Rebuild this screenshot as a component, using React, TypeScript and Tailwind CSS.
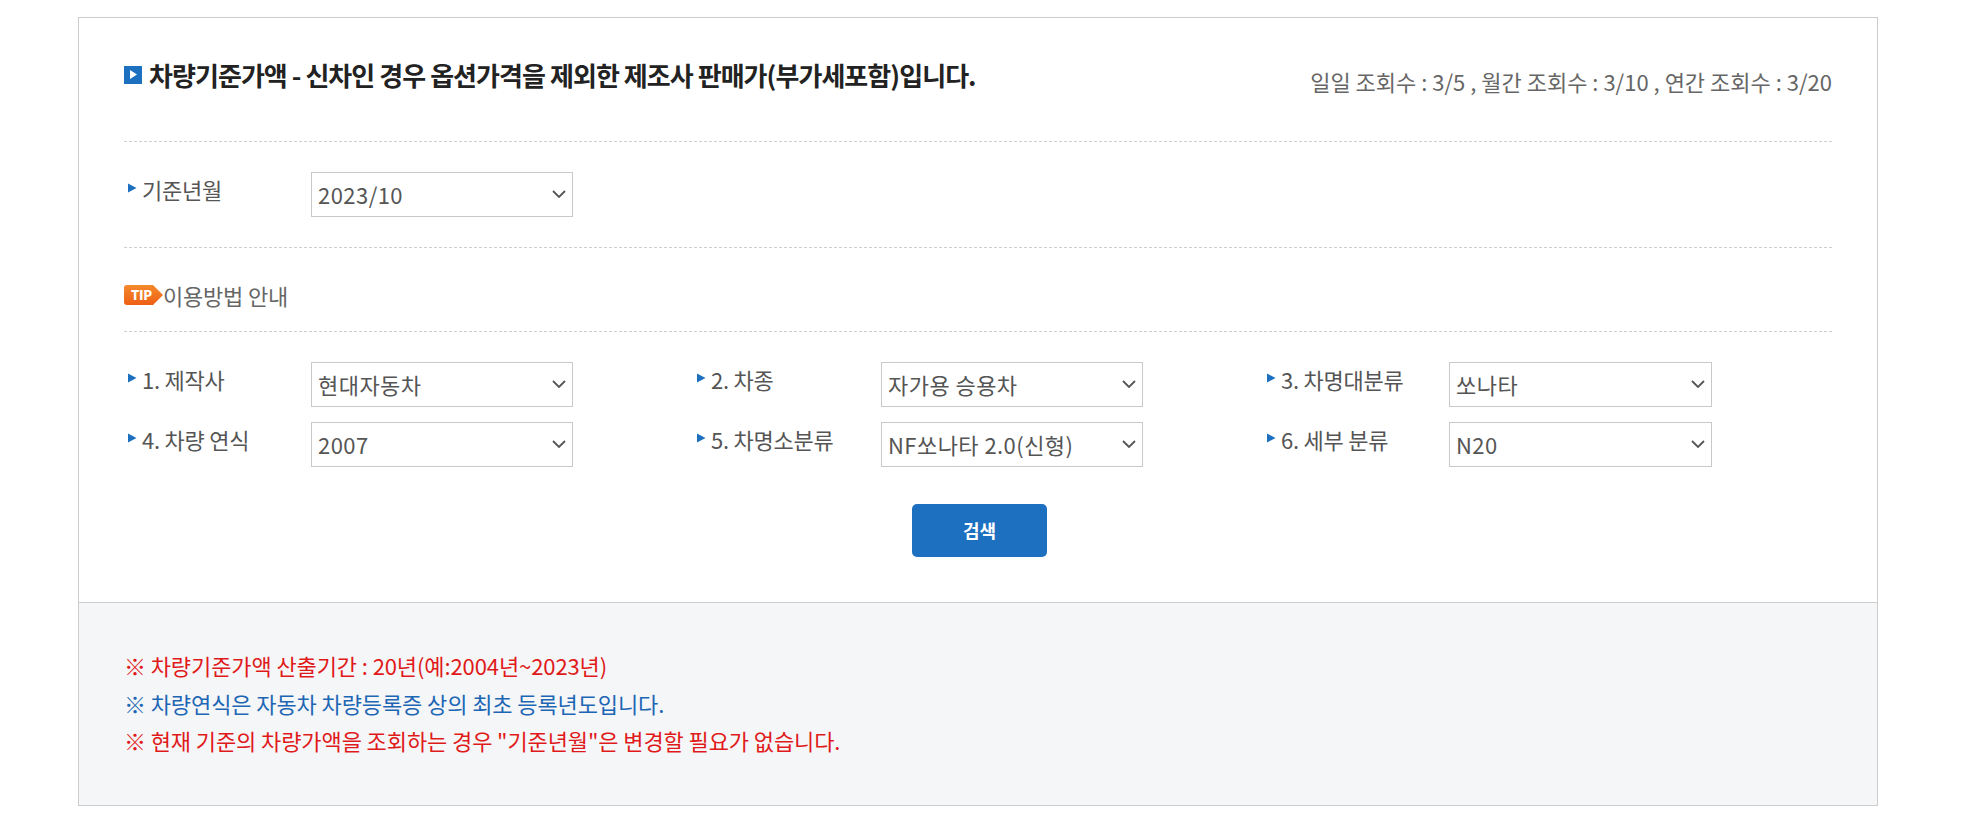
const FONT = "font-['Noto_Sans_CJK_KR','Noto_Sans',sans-serif]";

const ROW_ONE = [
  { label: "1. 제작사", value: "현대자동차" },
  { label: "2. 차종", value: "자가용 승용차" },
  { label: "3. 차명대분류", value: "쏘나타" },
];

const ROW_TWO = [
  { label: "4. 차량 연식", value: "2007" },
  { label: "5. 차명소분류", value: "NF쏘나타 2.0(신형)" },
  { label: "6. 세부 분류", value: "N20" },
];

function Label({ text, width }: { text: string; width: string }) {
  return (
    <div className={`flex shrink-0 items-start pl-[4px] ${width}`}>
      <svg width="9" height="10" viewBox="0 0 9 10" className="mt-[11px] mr-[5px] shrink-0">
        <path d="M0 0.5 L8.5 5 L0 9.5 Z" fill="#1d6fc0" />
      </svg>
      <span className="mt-[1px] text-[22px] leading-[33px] tracking-[-0.25px] text-[#555]">{text}</span>
    </div>
  );
}

function Select({ value, wide }: { value: string; wide?: boolean }) {
  return (
    <div className={`relative h-[45px] shrink-0 ${wide ? "w-[263px]" : "w-[262px]"}`}>
      <select
        defaultValue={value}
        className="h-full w-full appearance-none rounded-none border border-[#c9c9c9] bg-white px-[6px] text-[22px] tracking-[0.45px] text-[#555] outline-none"
      >
        <option>{value}</option>
      </select>
      <svg
        width="14"
        height="8"
        viewBox="0 0 14 8"
        className="pointer-events-none absolute top-[18px] right-[7px]"
      >
        <path d="M1 1 L7 7 L13 1" fill="none" stroke="#555" strokeWidth="1.8" />
      </svg>
    </div>
  );
}

function Dotted() {
  return <div className="border-t border-dashed border-[#cfcfcf]" />;
}

function Field({
  label,
  value,
  width,
  wide,
}: {
  label: string;
  value: string;
  width: string;
  wide?: boolean;
}) {
  return (
    <div className="flex items-start">
      <Label text={label} width={width} />
      <Select value={value} wide={wide} />
    </div>
  );
}

function FieldRow({ items }: { items: { label: string; value: string }[] }) {
  return (
    <div className="flex">
      <div className="w-[569px]">
        <Field {...items[0]} width="w-[187px]" />
      </div>
      <div className="w-[570px]">
        <Field {...items[1]} width="w-[188px]" />
      </div>
      <Field {...items[2]} width="w-[186px]" wide />
    </div>
  );
}

export default function App() {
  return (
    <div className={`${FONT} min-h-[814px] bg-white pt-[17px] pl-[78px]`}>
      <div className="w-[1800px] border border-[#cdcdcd]">
        <div className="h-[584px] px-[45px]">
          <div className="flex h-[123px] items-start justify-between">
            <div className="mt-[37px] flex items-center">
              <span className="mr-[7px] flex h-[18px] w-[18px] items-center justify-center bg-[#1d6fc0]">
                <svg width="7" height="9" viewBox="0 0 7 9">
                  <path d="M0 0 L7 4.5 L0 9 Z" fill="#fff" />
                </svg>
              </span>
              <span className="text-[26px] leading-[39px] font-bold tracking-[-0.95px] text-[#222]">
                차량기준가액 - 신차인 경우 옵션가격을 제외한 제조사 판매가(부가세포함)입니다.
              </span>
            </div>
            <div className="mt-[47px] text-[22px] leading-[33px] text-[#666]">
              일일 조회수 : 3/5 , 월간 조회수 : 3/10 , 연간 조회수 : 3/20
            </div>
          </div>
          <Dotted />
          <div className="flex h-[105px] items-start pt-[30px]">
            <Field label="기준년월" value="2023/10" width="w-[187px]" />
          </div>
          <Dotted />
          <div className="flex h-[83px] items-center pt-[12px]">
            <svg width="39" height="20" viewBox="0 0 39 20" className="mb-[2px] shrink-0">
              <defs>
                <linearGradient id="tipFill" x1="0" y1="0" x2="0" y2="1">
                  <stop offset="0" stopColor="#f58a2c" />
                  <stop offset="1" stopColor="#ee5f14" />
                </linearGradient>
              </defs>
              <path d="M3 0 H29 L39 10 L29 20 H3 Q0 20 0 17 V3 Q0 0 3 0 Z" fill="url(#tipFill)" />
              <text x="7" y="15" fontSize="13" fontWeight="800" letterSpacing="-0.3" fill="#fff">TIP</text>
            </svg>
            <span className="text-[22px] tracking-[-0.2px] text-[#666]">이용방법 안내</span>
          </div>
          <Dotted />
          <div className="flex flex-col gap-[15px] pt-[30px]">
            <FieldRow items={ROW_ONE} />
            <FieldRow items={ROW_TWO} />
          </div>
          <div className="mt-[37px] flex justify-center pl-[3px]">
            <button className="h-[53px] w-[135px] rounded-[5px] bg-[#1d6fc0] text-[18px] font-bold text-white">
              검색
            </button>
          </div>
        </div>
        <div className="h-[203px] border-t border-[#cdcdcd] bg-[#f5f6f8] px-[45px] pt-[44px] text-[22px] leading-[37.5px] tracking-[-0.1px]">
          <p className="text-[#e01a1a]">※ 차량기준가액 산출기간 : 20년(예:2004년~2023년)</p>
          <p className="text-[#1d66b4]">※ 차량연식은 자동차 차량등록증 상의 최초 등록년도입니다.</p>
          <p className="text-[#e01a1a]">※ 현재 기준의 차량가액을 조회하는 경우 "기준년월"은 변경할 필요가 없습니다.</p>
        </div>
      </div>
    </div>
  );
}
